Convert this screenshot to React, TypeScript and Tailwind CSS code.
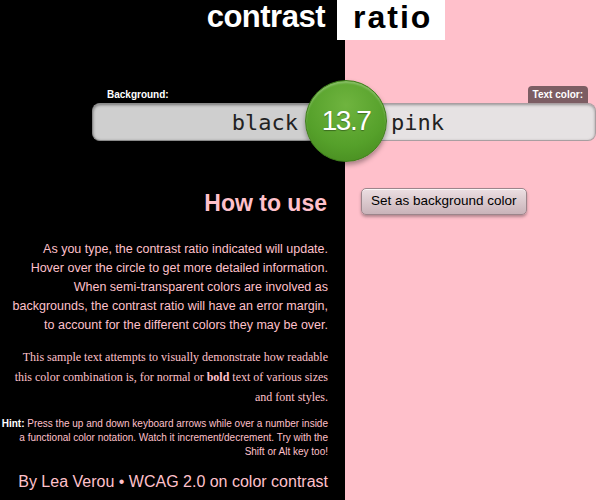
import React from 'react';

const pink = 'text-[#ffc0cb]';

const App: React.FC = () => {
  return (
    <div className="relative w-[600px] h-[500px] flex overflow-hidden font-['Liberation_Sans',Arial,sans-serif]">
      {/* left: background side */}
      <div className="w-[345px] shrink-0 bg-black">
        <div className="h-[40px] pr-[20px] text-right">
          <h1 className="text-[31px] leading-[34px] font-bold tracking-[-0.5px] text-white">contrast</h1>
        </div>

        <div className="mt-[46px] h-[17px] pl-[107px] flex items-center">
          <span className="text-[10px] font-bold text-white">Background:</span>
        </div>

        <div className="ml-[92px] h-[38px] flex items-center justify-end pr-[47px] bg-[#cfcfcf] rounded-l-[8px] shadow-[inset_0_1px_3px_rgba(0,0,0,0.45)] border border-r-0 border-[#8a8a8a]">
          <span className="font-['DejaVu_Sans_Mono',monospace] text-[22px] text-[#222]">black</span>
        </div>

        <div className="mt-[48px] h-[28px] pr-[18px] flex items-center justify-end">
          <h2 className={`text-[23px] font-bold ${pink}`}>How to use</h2>
        </div>

        <p className={`mt-[23px] pr-[17px] text-right whitespace-nowrap text-[12.5px] leading-[19px] ${pink}`}>
          As you type, the contrast ratio indicated will update.<br />
          Hover over the circle to get more detailed information.<br />
          When semi-transparent colors are involved as<br />
          backgrounds, the contrast ratio will have an error margin,<br />
          to account for the different colors they may be over.
        </p>

        <p className={`mt-[12px] pr-[17px] text-right whitespace-nowrap font-['Liberation_Serif',serif] text-[12px] leading-[20px] ${pink}`}>
          This sample text attempts to visually demonstrate how readable<br />
          this color combination is, for normal or <b>bold</b> text of various sizes<br />
          and font styles.
        </p>

        <p className={`mt-[10px] pr-[17px] text-right whitespace-nowrap text-[10px] leading-[14px] ${pink}`}>
          <b className="text-white">Hint:</b> Press the up and down keyboard arrows while over a number inside<br />
          a functional color notation. Watch it increment/decrement. Try with the<br />
          Shift or Alt key too!
        </p>

        <p className={`mt-[12px] pr-[17px] text-right whitespace-nowrap text-[16px] leading-[22px] ${pink}`}>
          By Lea Verou • WCAG 2.0 on color contrast
        </p>
      </div>

      {/* right: text colour side */}
      <div className="flex-1 bg-[#ffc0cb]">
        <div className="h-[40px] flex">
          <div className="-ml-[8px] w-[108px] h-[40px] bg-white pl-[16px]">
            <span className="text-[32px] leading-[34px] font-bold tracking-[2px] text-black">ratio</span>
          </div>
        </div>

        <div className="mt-[46px] h-[17px] pr-[12px] flex justify-end">
          <span className="px-[5px] h-[17px] flex items-center rounded-t-[4px] bg-[#7c5d63] text-[10px] font-bold text-white">Text color:</span>
        </div>

        <div className="mr-[4px] h-[38px] flex items-center pl-[46px] bg-[#e6e2e3] rounded-r-[8px] shadow-[inset_0_1px_3px_rgba(0,0,0,0.35)] border border-l-0 border-[#a99ea1]">
          <span className="font-['DejaVu_Sans_Mono',monospace] text-[22px] text-[#222]">pink</span>
        </div>

        <div className="mt-[47px] pl-[16px] flex">
          <button className="h-[27px] px-[9px] rounded-[5px] border border-[#9c858b] bg-[linear-gradient(#ecdfe2,#c9b3b9)] shadow-[0_2px_3px_rgba(0,0,0,0.3),inset_0_1px_0_rgba(255,255,255,0.7)] text-[13.5px] text-black">
            Set as background color
          </button>
        </div>
      </div>

      {/* ratio circle overlaps both inputs */}
      <div className="absolute left-[305px] top-[80px] w-[82px] h-[82px] rounded-full border border-[#3f7d1c] bg-[radial-gradient(circle_at_50%_30%,#6fb43f,#55a02a_60%,#44861d)] shadow-[0_3px_5px_rgba(0,0,0,0.35),inset_0_2px_2px_rgba(255,255,255,0.25)] flex items-center justify-center">
        <span className="text-[28px] tracking-[-1.5px] text-white [text-shadow:0_1px_1px_rgba(0,0,0,0.35)]">13.7</span>
      </div>
    </div>
  );
};

export default App;
